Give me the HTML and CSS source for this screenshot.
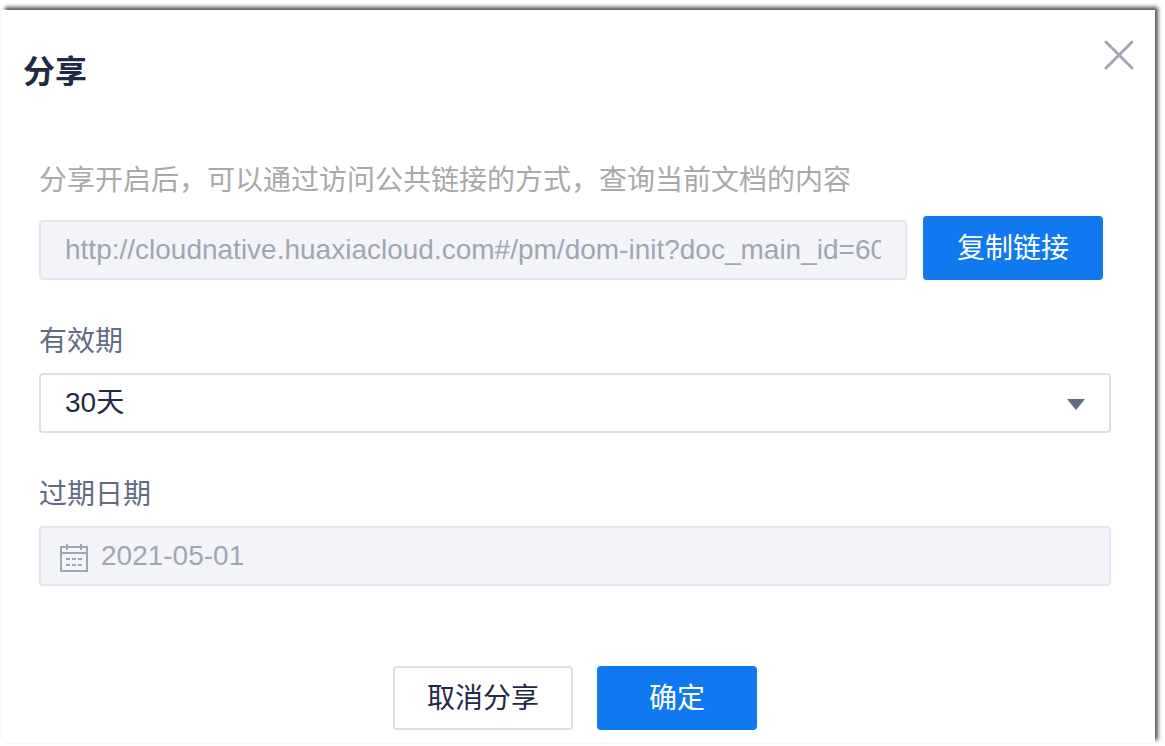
FILE: index.html
```html
<!DOCTYPE html>
<html lang="zh-CN">
<head>
<meta charset="utf-8">
<title>分享</title>
<link rel="stylesheet" href="styles.css">
</head>
<body>
<main class="dialog" role="dialog" aria-labelledby="dialog-title">
  <header class="dialog-header">
    <h1 class="dialog-title" id="dialog-title">分享</h1>
    <button class="close" type="button" aria-label="关闭">
      <svg width="32" height="32" viewBox="0 0 32 32" fill="none" stroke="currentColor" stroke-width="3" stroke-linecap="round"><path d="M3 3L29 29M29 3L3 29"/></svg>
    </button>
  </header>
  <form class="dialog-form">
    <div class="field share">
      <label class="hint" for="link">分享开启后，可以通过访问公共链接的方式，查询当前文档的内容</label>
      <div class="link-row">
        <input class="control muted" id="link" type="text" disabled value="http://cloudnative.huaxiacloud.com#/pm/dom-init?doc_main_id=608">
        <button class="button primary copy" type="button">复制链接</button>
      </div>
    </div>
    <div class="field">
      <label class="label" for="period">有效期</label>
      <div class="control-wrap">
        <select class="control" id="period"><option>30天</option></select>
        <svg class="arrow" width="18" height="11" viewBox="0 0 18 11"><path d="M0 0H18L9 11Z" fill="currentColor"/></svg>
      </div>
    </div>
    <div class="field">
      <label class="label" for="expires">过期日期</label>
      <div class="control-wrap">
        <input class="control muted dated" id="expires" type="text" disabled value="2021-05-01">
        <svg class="calendar" width="28" height="28" viewBox="0 0 28 28" fill="none" stroke="currentColor" stroke-width="2"><path d="M1 3H27V27H1ZM1 9H27M7 0V6M21 0V6M6 15H10M12 15H16M18 15H22M6 21H10M12 21H16M18 21H22"/></svg>
      </div>
    </div>
    <footer class="actions">
      <button class="button" type="button">取消分享</button>
      <button class="button primary confirm" type="submit">确定</button>
    </footer>
  </form>
</main>
</body>
</html>
```
FILE: styles.css
```css
* {
  box-sizing: border-box;
}

body {
  margin: 0;
  padding: 10px 10px 3px 2px;
  background: #fff;
  color: #1f2a44;
  font-family: "Liberation Sans", "Noto Sans CJK SC", sans-serif;
  font-size: 28px;
  line-height: 40px;
}

.dialog {
  padding: 29px 20px 13px 21px;
  background: #fff;
  box-shadow: 3px -3px 4px #555;
}

.dialog-header {
  display: flex;
  align-items: flex-start;
  justify-content: space-between;
}

.dialog-title {
  margin: 13px 0 0;
  font-size: 32px;
  line-height: 40px;
}

.close {
  display: flex;
  padding: 0;
  border: 0;
  background: none;
  color: #a1a6b3;
}

.dialog-form {
  display: flex;
  flex-direction: column;
  gap: 42px;
  padding: 69px 24px 0 16px;
}

.field {
  display: flex;
  flex-direction: column;
  gap: 11px;
}

.share {
  gap: 15px;
}

.hint {
  color: #a9a9a9;
}

.label {
  color: #636b84;
}

.link-row {
  display: flex;
  align-items: flex-end;
  gap: 16px;
  padding-right: 8px;
}

.control-wrap {
  position: relative;
  display: flex;
}

.control {
  flex: 1;
  min-width: 0;
  height: 60px;
  margin: 0;
  padding: 0 24px;
  border: 2px solid #dcdfe6;
  border-radius: 4px;
  background: #fff;
  color: #1f2a44;
  font: inherit;
  appearance: none;
}

.muted {
  border-color: #e3e6ec;
  background: #f3f4f9;
  color: #a1a6b3;
}

.dated {
  padding-left: 60px;
}

.arrow {
  position: absolute;
  top: 26px;
  right: 26px;
  color: #636b84;
  pointer-events: none;
}

.calendar {
  position: absolute;
  top: 18px;
  left: 21px;
  color: #a1a6b3;
}

.button {
  width: 180px;
  height: 64px;
  padding: 2px 0 0;
  border: 2px solid #dcdfe6;
  border-radius: 4px;
  background: #fff;
  color: #1f2a44;
  font: inherit;
}

.primary {
  border-color: #1179f0;
  background: #1179f0;
  color: #fff;
}

.confirm {
  width: 160px;
}

.actions {
  display: flex;
  justify-content: center;
  gap: 24px;
  padding-top: 38px;
}
```
